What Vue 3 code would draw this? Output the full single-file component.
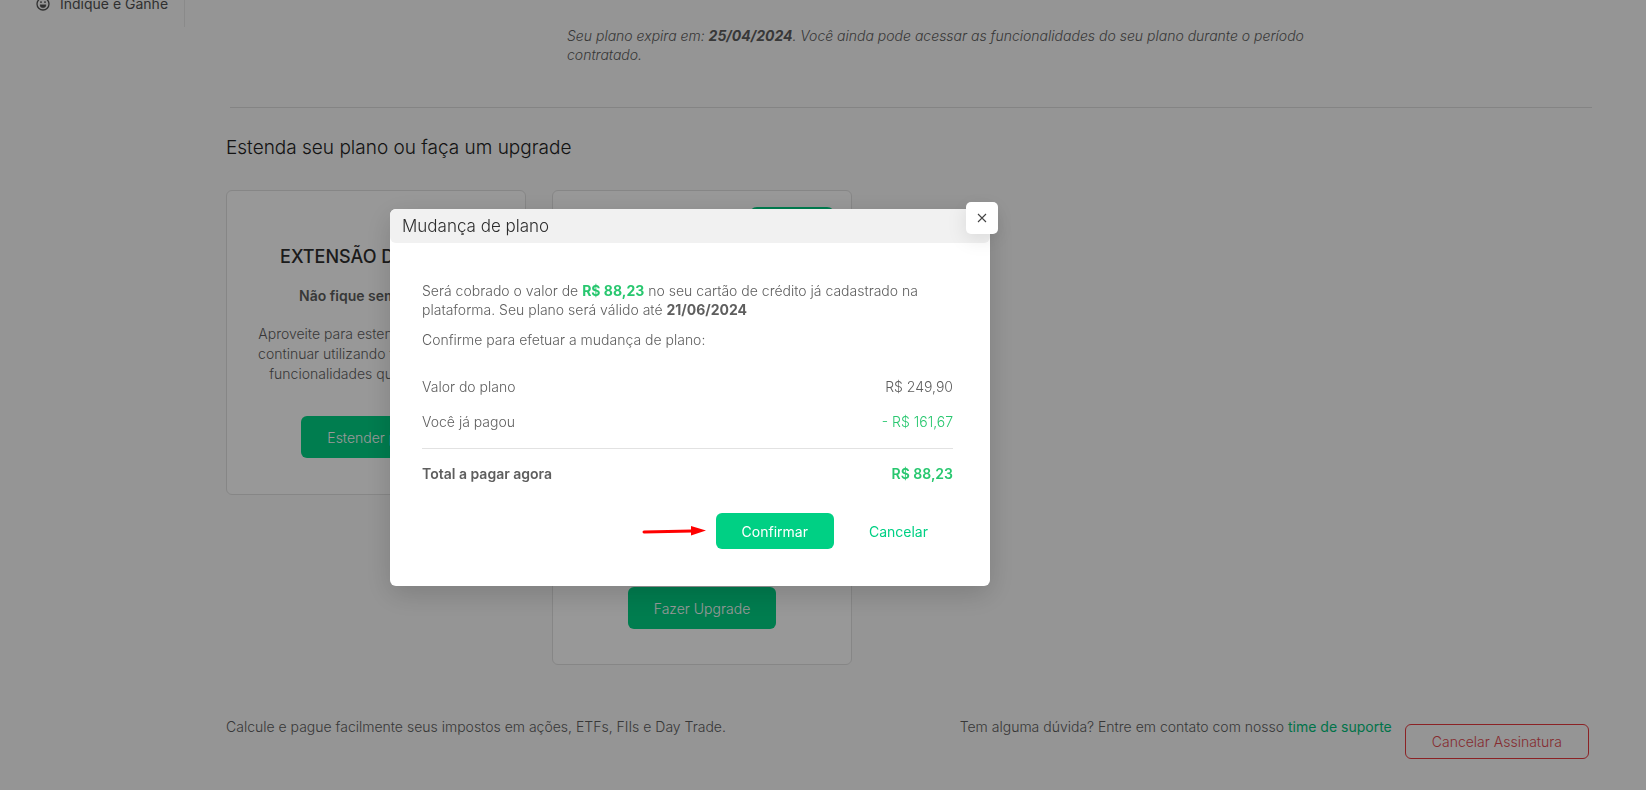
<script setup>
const summary = [
  { label: 'Valor do plano', value: 'R$ 249,90', kind: 'plain' },
  { label: 'Você já pagou', value: '- R$ 161,67', kind: 'credit' },
  { label: 'Total a pagar agora', value: 'R$ 88,23', kind: 'total' },
]
</script>

<template>
  <div class="app">
    <div class="page">
      <nav class="sidebar">
        <a href="#" class="nav-item">
          <svg viewBox="0 0 14 14" width="14" height="14" fill="none" stroke="currentColor">
            <circle cx="7" cy="7" r="6" stroke-width="1.3" />
            <path d="M5 4.2v1.7M9 4.2v1.7" stroke-width="1.4" />
            <path d="M4 7.8h6a3 3 0 0 1-6 0z" fill="currentColor" stroke-width="0.4" />
          </svg>
          <span>Indique e Ganhe</span>
        </a>
      </nav>

      <main class="content">
        <p class="expiry">
          Seu plano expira em: <strong>25/04/2024</strong>. Você ainda pode acessar as
          funcionalidades do seu plano durante o período contratado.
        </p>
        <hr class="rule" />
        <h2 class="heading">Estenda seu plano ou faça um upgrade</h2>

        <div class="cards">
          <section class="card">
            <h3>EXTENSÃO DE PLANO</h3>
            <p class="lead">Não fique sem acesso!</p>
            <p class="copy">
              Aproveite para estender seu plano e<br />continuar utilizando todas as nossas<br />funcionalidades que você já usa.
            </p>
            <button type="button" class="btn large">Estender plano</button>
          </section>
          <section class="card tall">
            <span class="badge"></span>
            <button type="button" class="btn large">Fazer Upgrade</button>
          </section>
        </div>

        <footer class="footer">
          <p class="tagline">Calcule e pague facilmente seus impostos em ações, ETFs, FIIs e Day Trade.</p>
          <p>Tem alguma dúvida? Entre em contato com nosso <a href="#">time de suporte</a></p>
          <button type="button" class="btn-danger">Cancelar Assinatura</button>
        </footer>
      </main>
    </div>

    <div class="overlay">
      <div class="modal" role="dialog" aria-modal="true" aria-labelledby="modal-title">
        <h1 id="modal-title" class="modal-head">Mudança de plano</h1>
        <button type="button" class="close" aria-label="Fechar">
          <svg viewBox="0 0 10 10" width="10" height="10" stroke="currentColor" stroke-width="1.1">
            <path d="M1 1l8 8M9 1l-8 8" />
          </svg>
        </button>
        <div class="modal-body">
          <p>
            Será cobrado o valor de <strong class="green">R$ 88,23</strong> no seu cartão de crédito já
            cadastrado na plataforma. Seu plano será válido até <strong>21/06/2024</strong>
          </p>
          <p>Confirme para efetuar a mudança de plano:</p>
          <dl class="summary">
            <div v-for="row in summary" :key="row.label" class="row" :class="row.kind">
              <dt>{{ row.label }}</dt>
              <dd>{{ row.value }}</dd>
            </div>
          </dl>
          <div class="actions">
            <svg class="arrow" viewBox="0 0 64 12" width="64" height="12">
              <path d="M2 7L50 6" stroke="#ff0000" stroke-width="3" stroke-linecap="round" />
              <path d="M49 1L64 5.5L49 10.5z" fill="#ff0000" />
            </svg>
            <button type="button" class="btn">Confirmar</button>
            <button type="button" class="btn-text">Cancelar</button>
          </div>
        </div>
      </div>
    </div>
  </div>
</template>

<style>
body {
  background: #f8f8f8;
}
</style>

<style scoped>
.app {
  min-height: 100vh;
  font: 300 14px/19px Inter, "Open Sans", sans-serif;
  color: #5e5e5e;
}
.app * {
  box-sizing: border-box;
}
h1, h2, h3, p, dl, dd {
  margin: 0;
}
strong {
  font-weight: 700;
}
a {
  text-decoration: none;
}
button {
  font: inherit;
  cursor: pointer;
}
.page {
  display: flex;
  align-items: flex-start;
  height: 100vh;
  overflow: hidden;
}
.sidebar {
  flex: 0 0 185px;
  display: flex;
  align-items: flex-end;
  height: 27px;
  padding: 0 0 14px 36px;
  border-right: 1px solid #e7e7e7;
}
.nav-item {
  display: flex;
  align-items: center;
  gap: 10px;
  font-weight: 400;
  color: #505050;
  white-space: nowrap;
}
.content {
  flex: 1;
  min-width: 0;
  padding: 26px 54px 0 41px;
}
.expiry {
  max-width: 1110px;
  padding-left: 341px;
  font-style: italic;
}
.rule {
  height: 1px;
  margin: 43px 0 0 4px;
  border: 0;
  background: #dcdcdc;
}
.heading {
  margin-top: 28px;
  font-size: 19px;
  line-height: 24px;
  font-weight: 300;
  color: #222;
}
.cards {
  display: flex;
  align-items: flex-start;
  gap: 26px;
  margin-top: 30px;
}
.card {
  display: flex;
  flex-direction: column;
  align-items: center;
  width: 300px;
  padding: 54px 16px 36px;
  border: 1px solid #e0e0e0;
  border-radius: 6px;
  background: #fefefe;
  text-align: center;
}
.card h3 {
  font-size: 18px;
  line-height: 24px;
  font-weight: 500;
  color: #2e2e2e;
}
.lead {
  margin-top: 17px;
  line-height: 19px;
  font-weight: 600;
}
.copy {
  margin: 19px 0 32px;
  line-height: 20px;
  white-space: nowrap;
}
.tall {
  height: 475px;
  padding-top: 16px;
  padding-bottom: 35px;
  justify-content: space-between;
}
.badge {
  align-self: flex-end;
  width: 86px;
  height: 24px;
  border-radius: 8px;
  background: #00d084;
}
.btn {
  min-height: 36px;
  padding: 0 26px;
  border: 0;
  border-radius: 6px;
  background: #00d084;
  color: #fff;
}
.large {
  min-height: 42px;
}
.footer {
  display: flex;
  align-items: flex-start;
  gap: 13px;
  margin-top: 52px;
  padding-right: 3px;
}
.tagline {
  margin-right: auto;
}
.footer a {
  font-weight: 400;
  color: #00c07a;
}
.btn-danger {
  height: 35px;
  margin-top: 7px;
  padding: 0 26px;
  border: 1px solid #e8393f;
  border-radius: 6px;
  background: transparent;
  color: #e04a50;
}
.overlay {
  position: fixed;
  inset: 0;
  padding: 209px 20px 20px 390px;
  background: rgba(0, 0, 0, 0.4);
}
.modal {
  position: relative;
  max-width: 600px;
  border-radius: 6px;
  background: #fff;
  box-shadow: 0 8px 28px rgba(0, 0, 0, 0.16);
}
.modal-head {
  padding: 5px 12px;
  border-radius: 6px;
  background: #f1f1f1;
  font-size: 17px;
  line-height: 24px;
  font-weight: 300;
  color: #2c2c2c;
}
.close {
  position: absolute;
  top: -7px;
  right: -8px;
  display: grid;
  place-items: center;
  width: 32px;
  height: 32px;
  padding: 0;
  border: 0;
  border-radius: 5px;
  background: #fff;
  color: #444;
  box-shadow: 0 5px 20px rgba(0, 0, 0, 0.1);
}
.modal-body {
  padding: 38px 37px 37px 32px;
}
.modal-body p + p {
  margin-top: 11px;
}
.green {
  color: #28c76f;
}
.summary {
  margin-top: 20px;
}
.row {
  display: flex;
  justify-content: space-between;
  padding: 8px 0;
}
.credit {
  padding-bottom: 17px;
}
.credit dd,
.total dd {
  color: #28c76f;
}
.total {
  padding-top: 15px;
  border-top: 1px solid #e2e2e2;
  font-weight: 600;
}
.actions {
  display: flex;
  align-items: center;
  justify-content: flex-end;
  gap: 10px;
  margin-top: 22px;
}
.btn-text {
  height: 36px;
  padding: 0 25px;
  border: 0;
  background: none;
  color: #00d084;
}
.actions button {
  font-weight: 400;
}
</style>
